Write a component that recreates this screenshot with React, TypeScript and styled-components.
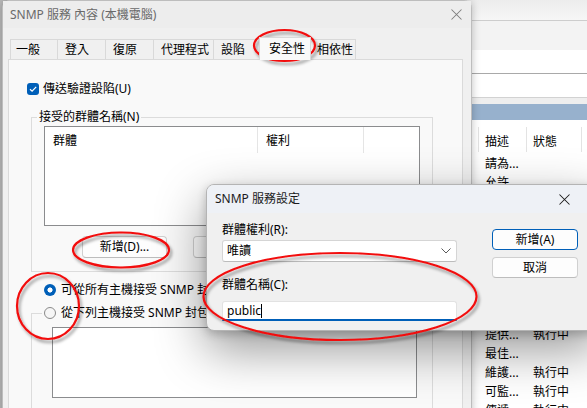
import React from "react";
import styled, { createGlobalStyle } from "styled-components";

const UI_FONT = `"Noto Sans", "Noto Sans CJK TC", sans-serif`;

const GlobalStyle = createGlobalStyle`
  html, body { margin: 0; padding: 0; background: #b9b9b9; }
  body { font-family: ${UI_FONT}; font-size: 12px; line-height: 16px; color: #000; }
  * { box-sizing: border-box; }
`;

const Desktop = styled.div`
  position: relative;
  width: 587px;
  height: 408px;
  overflow: hidden;
  background: #b9b9b9;
`;

/* ---------- background services window ---------- */
const ServicesWindow = styled.div`
  position: absolute;
  left: 300px;
  top: 0;
  width: 320px;
  height: 408px;
  display: flex;
  flex-direction: column;
  background: #fff;
`;
const SvcTitleBar = styled.div`
  flex: none;
  height: 21px;
  background: linear-gradient(#ececec, #f6f6f6);
  border-bottom: 1px solid #cdcdcd;
`;
const SvcMenuBar = styled.div`
  flex: none;
  height: 29px;
  background: #f3f3f3;
`;
const SvcField = styled.div<{ $line: string }>`
  flex: none;
  height: 24px;
  background: #fff;
  border-bottom: 1px solid ${(p) => p.$line};
`;
const SvcGap = styled.div`
  flex: none;
  height: 6px;
  background: #eeeeee;
`;
const SvcPaneHeader = styled.div`
  flex: none;
  height: 16px;
  background: #97b1cd;
`;
const SvcList = styled.div`
  flex: 1;
  padding-top: 7px;
  display: flex;
  flex-direction: column;
`;
const SvcGrid = styled.div`
  display: grid;
  grid-template-columns: 179px 48px 55px 1fr;
`;
const SvcHeaderCell = styled.div`
  height: 25px;
  padding: 7px 0 0 6px;
  border-right: 1px solid #e3e3e3;
  white-space: nowrap;
`;
const SvcHeaderGap = styled.div`
  height: 2px;
`;
const SvcRow = styled(SvcGrid)`
  height: 19px;
`;
const SvcCell = styled.div`
  padding: 2px 0 0 6px;
  white-space: nowrap;
  overflow: hidden;
`;

/* ---------- main properties dialog ---------- */
const MainDialog = styled.div`
  position: absolute;
  left: 2px;
  top: 0;
  width: 470px;
  height: 460px;
  background: #f0f0f0;
  border: 1px solid #bdbdbd;
  border-radius: 8px 8px 0 0;
  box-shadow: 0 0 9px rgba(0, 0, 0, 0.25);
  display: flex;
  flex-direction: column;
`;
const TitleBar = styled.div<{ $active?: boolean }>`
  flex: none;
  height: ${(p) => (p.$active ? 28 : 27)}px;
  display: flex;
  align-items: center;
  justify-content: space-between;
  padding: ${(p) => (p.$active ? "0 6px 0 8px" : "0 9px 0 7px")};
  background: ${(p) => (p.$active ? "#eef1f6" : "#ededed")};
  color: ${(p) => (p.$active ? "#1b1b1b" : "#6a6a6a")};
  white-space: nowrap;
`;
const CloseBox = styled.span`
  width: 34px;
  display: flex;
`;
const CloseGlyph = ({ color }: { color: string }) => (
  <svg width="11" height="11" viewBox="0 0 11 11">
    <path d="M0.5 0.5 L10.5 10.5 M10.5 0.5 L0.5 10.5" stroke={color} strokeWidth="1.05" fill="none" />
  </svg>
);

const TabStrip = styled.div`
  flex: none;
  margin-top: 11px;
  padding-left: 7px;
  height: 20px;
  display: flex;
  align-items: flex-end;
`;
const Tab = styled.div<{ $w: number; $first?: boolean; $last?: boolean; $selected?: boolean }>`
  flex: none;
  width: ${(p) => p.$w}px;
  height: 20px;
  padding: 2px 0 0 ${(p) => (p.$first ? 5 : 7)}px;
  background: #f0f0f0;
  border-top: 1px solid #d9d9d9;
  border-left: 1px solid #d9d9d9;
  border-right: ${(p) => (p.$last ? "1px solid #d9d9d9" : "none")};
  white-space: nowrap;
  ${(p) =>
    p.$selected &&
    `
    position: relative;
    z-index: 1;
    width: ${p.$w + 4}px;
    height: 23px;
    margin: 0 -2px -1px -2px;
    padding: 3px 0 0 9px;
    background: #f9f9f9;
    border-right: 1px solid #d9d9d9;
  `}
`;

const TabPanel = styled.div`
  flex: 1;
  margin-left: 5px;
  width: 455px;
  background: #f9f9f9;
  border: 1px solid #dadada;
  padding-top: 21px;
  display: flex;
  flex-direction: column;
  align-items: flex-start;
`;

const CheckRow = styled.div`
  margin-left: 18px;
  height: 16px;
  display: flex;
  align-items: center;
  gap: 4px;
  white-space: nowrap;
`;
const CheckBox = styled.span`
  width: 12px;
  height: 12px;
  border-radius: 3px;
  background: #005fb8;
  display: flex;
  align-items: center;
  justify-content: center;
`;

const GroupBox = styled.fieldset<{ $top: number }>`
  margin: ${(p) => p.$top}px 0 0 22px;
  width: 402px;
  padding: 0;
  border: 1px solid #dcdcdc;
  min-width: 0;
`;
const GroupLegend = styled.legend<{ $offset: number }>`
  margin-left: ${(p) => p.$offset}px;
  padding: 0 2px;
  line-height: 16px;
  white-space: nowrap;
`;
const GroupBody = styled.div<{ $pb: number }>`
  padding-bottom: ${(p) => p.$pb}px;
`;

const ListBox = styled.div<{ $w: number; $h: number; $mt: number; $ml: number }>`
  width: ${(p) => p.$w}px;
  height: ${(p) => p.$h}px;
  margin: ${(p) => p.$mt}px 0 0 ${(p) => p.$ml}px;
  background: #fff;
  border: 1px solid #8b8c8e;
`;
const ListHeader = styled.div`
  display: flex;
  height: 26px;
`;
const ListHeaderCell = styled.div<{ $w: number }>`
  width: ${(p) => p.$w}px;
  padding: 6px 0 0 8px;
  border-right: 1px solid #e5e5e5;
`;

const ButtonRow = styled.div`
  margin: 10px 0 0 50px;
  display: flex;
  gap: 26px;
`;
const PushButton = styled.div<{ $w: number; $h: number; $default?: boolean }>`
  width: ${(p) => p.$w}px;
  height: ${(p) => p.$h}px;
  display: flex;
  align-items: center;
  justify-content: center;
  background: #fdfdfd;
  border: 1px solid ${(p) => (p.$default ? "#005fb8" : "#d0d0d0")};
  border-bottom-color: ${(p) => (p.$default ? "#005fb8" : "#bdbdbd")};
  border-radius: 4px;
  white-space: nowrap;
`;

const RadioRow = styled.div<{ $ml?: number; $mt?: number }>`
  margin: ${(p) => p.$mt ?? 0}px 0 0 ${(p) => p.$ml ?? 0}px;
  height: 16px;
  display: flex;
  align-items: center;
  gap: 5px;
  white-space: nowrap;
`;
const RadioDot = styled.span<{ $checked?: boolean }>`
  flex: none;
  width: 12px;
  height: 12px;
  border-radius: 50%;
  ${(p) =>
    p.$checked
      ? `background: radial-gradient(circle, #ffffff 0 2.2px, #005fb8 2.9px);`
      : `background: #f6f6f6; border: 1px solid #8a8a8a;`}
`;

/* ---------- sub dialog ---------- */
const SubDialog = styled.div`
  position: absolute;
  left: 206px;
  top: 184px;
  width: 394px;
  height: 147px;
  background: #f0f0f0;
  border: 1px solid #b4b4b4;
  border-radius: 8px;
  overflow: hidden;
  box-shadow: 0 18px 50px rgba(0, 0, 0, 0.42), 0 3px 10px rgba(0, 0, 0, 0.2);
  display: flex;
  flex-direction: column;
`;
const SubBody = styled.div`
  display: flex;
  gap: 35px;
  padding: 9px 0 0 15px;
`;
const FormColumn = styled.div`
  width: 235px;
  display: flex;
  flex-direction: column;
`;
const FieldLabel = styled.div<{ $mt?: number }>`
  margin-top: ${(p) => p.$mt ?? 0}px;
  height: 16px;
  white-space: nowrap;
`;
const ComboBox = styled.div`
  margin-top: 2px;
  height: 22px;
  background: #fff;
  border: 1px solid #d5d5d5;
  border-bottom-color: #bcbcbc;
  border-radius: 3px;
  display: flex;
  align-items: center;
  justify-content: space-between;
  padding: 0 5px 0 4px;
`;
const TextField = styled.div`
  margin-top: 8px;
  height: 20px;
  background: #fff;
  border: 1px solid #e2e2e2;
  border-bottom: 2px solid #005fb8;
  border-radius: 3px 3px 0 0;
  display: flex;
  align-items: center;
  padding-left: 4px;
`;
const Caret = styled.span`
  display: inline-block;
  width: 1px;
  height: 14px;
  background: #000;
`;
const ButtonColumn = styled.div`
  padding-top: 7px;
  display: flex;
  flex-direction: column;
  gap: 7px;
`;

/* ---------- annotation overlay ---------- */
const Annotations = styled.svg`
  position: absolute;
  left: 0;
  top: 0;
  pointer-events: none;
`;

const svcRows: [string, string][] = [
  ["請為...", ""],
  ["允許...", ""],
  ["", ""],
  ["", ""],
  ["", ""],
  ["", ""],
  ["", ""],
  ["", ""],
  ["", ""],
  ["提供...", "執行中"],
  ["最佳...", ""],
  ["維護...", "執行中"],
  ["可監...", "執行中"],
  ["傳遞...", "執行中"],
];

export default function App() {
  return (
    <Desktop>
      <GlobalStyle />

      <ServicesWindow>
        <SvcTitleBar />
        <SvcMenuBar />
        <SvcField $line="#a9a9a9" />
        <SvcField $line="#d2d2d2" />
        <SvcGap />
        <SvcPaneHeader />
        <SvcList>
          <SvcGrid>
            <SvcHeaderCell>名稱</SvcHeaderCell>
            <SvcHeaderCell>描述</SvcHeaderCell>
            <SvcHeaderCell>狀態</SvcHeaderCell>
            <SvcHeaderCell />
          </SvcGrid>
          <SvcHeaderGap />
          {svcRows.map(([d, s], i) => (
            <SvcRow key={i}>
              <SvcCell />
              <SvcCell>{d}</SvcCell>
              <SvcCell>{s}</SvcCell>
              <SvcCell />
            </SvcRow>
          ))}
        </SvcList>
      </ServicesWindow>

      <MainDialog>
        <TitleBar>
          <span>SNMP 服務 內容 (本機電腦)</span>
          <CloseGlyph color="#7d7d7d" />
        </TitleBar>
        <TabStrip>
          <Tab $w={47} $first>一般</Tab>
          <Tab $w={48}>登入</Tab>
          <Tab $w={48}>復原</Tab>
          <Tab $w={60}>代理程式</Tab>
          <Tab $w={48}>設陷</Tab>
          <Tab $w={48} $selected>安全性</Tab>
          <Tab $w={47} $last>相依性</Tab>
        </TabStrip>
        <TabPanel>
          <CheckRow>
            <CheckBox>
              <svg width="10" height="10" viewBox="0 0 10 10">
                <path d="M2 5.2 L4.1 7.2 L8.2 2.9" stroke="#fff" strokeWidth="1.2" fill="none" />
              </svg>
            </CheckBox>
            <span>傳送驗證設陷(U)</span>
          </CheckRow>

          <GroupBox $top={12}>
            <GroupLegend $offset={5}>接受的群體名稱(N)</GroupLegend>
            <GroupBody $pb={13}>
              <ListBox $w={376} $h={100} $mt={1} $ml={12}>
                <ListHeader>
                  <ListHeaderCell $w={213}>群體</ListHeaderCell>
                  <ListHeaderCell $w={106}>權利</ListHeaderCell>
                </ListHeader>
              </ListBox>
              <ButtonRow>
                <PushButton $w={85} $h={22}>新增(D)...</PushButton>
                <PushButton $w={85} $h={22} />
                <PushButton $w={85} $h={22} />
              </ButtonRow>
            </GroupBody>
          </GroupBox>

          <RadioRow $ml={35} $mt={10}>
            <RadioDot $checked />
            <span>可從所有主機接受 SNMP 封包(C)</span>
          </RadioRow>

          <GroupBox $top={7}>
            <GroupLegend $offset={10}>
              <RadioRow>
                <RadioDot />
                <span>從下列主機接受 SNMP 封包(T)</span>
              </RadioRow>
            </GroupLegend>
            <GroupBody $pb={40}>
              <ListBox $w={365} $h={71} $mt={6} $ml={20} />
            </GroupBody>
          </GroupBox>
        </TabPanel>
      </MainDialog>

      <SubDialog>
        <TitleBar $active>
          <span>SNMP 服務設定</span>
          <CloseBox>
            <CloseGlyph color="#1b1b1b" />
          </CloseBox>
        </TitleBar>
        <SubBody>
          <FormColumn>
            <FieldLabel>群體權利(R):</FieldLabel>
            <ComboBox>
              <span>唯讀</span>
              <svg width="10" height="6" viewBox="0 0 10 6">
                <path d="M0.5 0.5 L5 5 L9.5 0.5" stroke="#5a5a5a" strokeWidth="1" fill="none" />
              </svg>
            </ComboBox>
            <FieldLabel $mt={15}>群體名稱(C):</FieldLabel>
            <TextField>
              <span>public</span>
              <Caret />
            </TextField>
          </FormColumn>
          <ButtonColumn>
            <PushButton $w={86} $h={21} $default>新增(A)</PushButton>
            <PushButton $w={86} $h={21}>取消</PushButton>
          </ButtonColumn>
        </SubBody>
      </SubDialog>

      <Annotations width="587" height="408" viewBox="0 0 587 408">
        <defs>
          <filter id="inkShadow" x="-20%" y="-20%" width="140%" height="140%">
            <feDropShadow dx="2" dy="3" stdDeviation="1.6" floodColor="#000" floodOpacity="0.4" />
          </filter>
        </defs>
        <g fill="none" stroke="#f20d0d" strokeWidth="2.2" filter="url(#inkShadow)">
          <ellipse cx="284.5" cy="45.5" rx="30.5" ry="15.5" />
          <ellipse cx="121" cy="250" rx="48" ry="17.5" />
          <ellipse cx="48" cy="306" rx="31" ry="33" />
          <ellipse cx="340" cy="296.5" rx="136.5" ry="43.5" />
        </g>
      </Annotations>
    </Desktop>
  );
}
